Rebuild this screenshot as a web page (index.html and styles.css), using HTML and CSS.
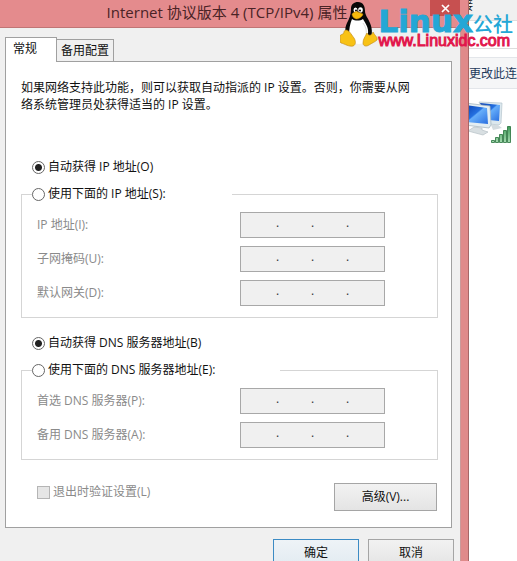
FILE: index.html
```html
<!DOCTYPE html>
<html lang="zh-CN">
<head>
<meta charset="utf-8">
<title>Internet 协议版本 4 (TCP/IPv4) 属性</title>
<link rel="stylesheet" href="styles.css">
</head>
<body>
<div class="desktop">
  <form class="dialog">
    <header class="titlebar">
      <h1 class="title">Internet 协议版本 4 (TCP/IPv4) 属性</h1>
      <button type="button" class="close" aria-label="关闭"><svg width="9" height="9" viewBox="0 0 9 9"><path d="M1 1L8 8M8 1L1 8" stroke="#fff" stroke-width="1.7"/></svg></button>
    </header>
    <div class="client">
      <div class="tabs" role="tablist">
        <button type="button" class="tab active" role="tab" aria-selected="true">常规</button>
        <button type="button" class="tab" role="tab" aria-selected="false">备用配置</button>
      </div>
      <div class="panel">
        <p class="intro">如果网络支持此功能，则可以获取自动指派的 IP 设置。否则，你需要从网络系统管理员处获得适当的 IP 设置。</p>

        <label class="choice lone"><input type="radio" name="ip" checked>自动获得 IP 地址(O)</label>
        <fieldset class="group">
          <legend class="legend"><label class="choice"><input type="radio" name="ip">使用下面的 IP 地址(S):</label></legend>
          <div class="row">
            <label for="ip1">IP 地址(I):</label>
            <div class="address"><input id="ip1" disabled><span>.</span><input aria-label="2" disabled><span>.</span><input aria-label="3" disabled><span>.</span><input aria-label="4" disabled></div>
          </div>
          <div class="row">
            <label for="mask1">子网掩码(U):</label>
            <div class="address"><input id="mask1" disabled><span>.</span><input aria-label="2" disabled><span>.</span><input aria-label="3" disabled><span>.</span><input aria-label="4" disabled></div>
          </div>
          <div class="row">
            <label for="gate1">默认网关(D):</label>
            <div class="address"><input id="gate1" disabled><span>.</span><input aria-label="2" disabled><span>.</span><input aria-label="3" disabled><span>.</span><input aria-label="4" disabled></div>
          </div>
        </fieldset>

        <label class="choice lone"><input type="radio" name="dns" checked>自动获得 DNS 服务器地址(B)</label>
        <fieldset class="group">
          <legend class="legend wide"><label class="choice"><input type="radio" name="dns">使用下面的 DNS 服务器地址(E):</label></legend>
          <div class="row">
            <label for="dns1">首选 DNS 服务器(P):</label>
            <div class="address"><input id="dns1" disabled><span>.</span><input aria-label="2" disabled><span>.</span><input aria-label="3" disabled><span>.</span><input aria-label="4" disabled></div>
          </div>
          <div class="row">
            <label for="dns2">备用 DNS 服务器(A):</label>
            <div class="address"><input id="dns2" disabled><span>.</span><input aria-label="2" disabled><span>.</span><input aria-label="3" disabled><span>.</span><input aria-label="4" disabled></div>
          </div>
        </fieldset>

        <div class="footer">
          <label class="check"><input type="checkbox" disabled>退出时验证设置(L)</label>
          <button type="button" class="button advanced">高级(V)...</button>
        </div>
      </div>
      <div class="actions">
        <button type="submit" class="button default">确定</button>
        <button type="button" class="button">取消</button>
      </div>
    </div>
  </form>

  <aside class="behind">
    <div class="caption">接</div>
    <div class="crumbs"></div>
    <div class="toolbar"><a href="#">更改此连</a></div>
    <svg class="network" width="46" height="46" viewBox="0 0 46 46" role="img" aria-label="网络连接">
      <defs>
        <linearGradient id="screen" x1="0" y1="0" x2="1" y2="1"><stop offset="0" stop-color="#0b3fb0"/><stop offset=".45" stop-color="#2470e0"/><stop offset=".5" stop-color="#66aefa"/><stop offset="1" stop-color="#2a6fe0"/></linearGradient>
        <linearGradient id="bars" x1="0" y1="0" x2="0" y2="1"><stop offset="0" stop-color="#3f9a58"/><stop offset="1" stop-color="#a5dbb0"/></linearGradient>
      </defs>
      <path d="M10 2L33 3 32 23 30 25 20 24Z" fill="#dce8ee" stroke="#b4c4cd" stroke-width=".7"/>
      <path d="M11 3L31 5 30 21 20 20Z" fill="url(#screen)"/>
      <path d="M22 25L29 25 33 28 24 30Z" fill="#d4dce0"/>
      <path d="M-4 3L21 6 22 25 20 28 -4 25Z" fill="#e4eef2" stroke="#9fb0ba" stroke-width=".7"/>
      <path d="M-4 5L18 8 19 24 -4 22Z" fill="url(#screen)"/>
      <path d="M5 27L13 28 13 30 19 32 14 35 -1 31Z" fill="#d8dfe2" stroke="#b6c0c5" stroke-width=".7"/>
      <g fill="url(#bars)" stroke="#24703a" stroke-width=".8"><path d="M22.500 40.500h3v2h-3zM26.500 37.500h3v5h-3zM30.500 34.500h3v8h-3zM34.500 30.500h3v12h-3zM38.500 26.500h3v16h-3z"/></g>
    </svg>
  </aside>

  <div class="watermark">
    <svg class="tux" width="38" height="46" viewBox="0 0 38 46" role="img" aria-label="Tux">
      <path d="M11 8C11 3 14 1 18 1c5 0 7 4 7 9 0 4 3 7 5 12 3 7 2 13 0 17H10C5 34 4 28 7 22c2-4 4-8 4-14z" fill="#080808"/>
      <path d="M12 18c3 2 8 2 11 0 2 4 6 8 5 15 0 7-4 10-9 10s-10-3-10-9c0-6 1-11 3-16z" fill="#fff"/>
      <path d="M23 22c3 4 4 8 3 13" fill="none" stroke="#ddd"/>
      <ellipse cx="15.500" cy="9" rx="2" ry="2.500" fill="#fff"/><ellipse cx="20.500" cy="9" rx="2.300" ry="2.800" fill="#fff"/>
      <circle cx="16" cy="9.500" r="1"/><circle cx="20" cy="9.500" r="1"/>
      <path d="M12 13c2-2 4-3 6-2l5 2c0 2-4 5-6 5s-5-2-5-5z" fill="#f6b90c" stroke="#b67a05" stroke-width=".5"/>
      <path d="M6 29c3 0 5 4 8 8 2 3 2 7-1 8-4 1-8-2-12-3-2-1 0-4-1-7 0-2 4-1 4-4 0-1 1-2 2-2z" fill="#f8c215" stroke="#bd8411" stroke-width=".6"/>
      <path d="M27 32c1 3 5 3 6-1 2 4 5 5 4 8-2 2-5 3-8 5-3 2-6 1-6-2 0-4 2-6 4-10z" fill="#f8c215" stroke="#bd8411" stroke-width=".6"/>
    </svg>
    <div class="brand">
      <div class="name"><b>Linux</b><span>公社</span></div>
      <div class="site">www.Linuxidc.com</div>
    </div>
  </div>
</div>
</body>
</html>
```
FILE: styles.css
```css
* { box-sizing: border-box; }

body {
  margin: 0;
  overflow: hidden;
  background: #fff;
  color: #111;
  font: 12px/18px "Open Sans", "Noto Sans CJK SC", sans-serif;
}

button, input { font: inherit; color: inherit; }

.desktop {
  position: relative;
  display: grid;
  grid-template-columns: minmax(0, 1fr) 48px;
  height: 100vh;
  overflow: hidden;
}

.dialog {
  display: flex;
  flex-direction: column;
  border-right: 1px solid #a76666;
  background: #e08a8a;
}

.titlebar {
  display: flex;
  justify-content: center;
  flex: none;
  height: 28px;
  border-bottom: 1px solid #c07575;
  background: #e48b8d;
}

.title {
  margin: 0 0 0 24px;
  flex: 1;
  text-align: center;
  color: #4a2326;
  font-size: 15px;
  font-weight: 400;
  line-height: 25px;
  white-space: nowrap;
}

.close {
  display: grid;
  place-items: center;
  width: 30px;
  height: 16px;
  margin-right: 8px;
  border: 0;
  background: #c75050;
}

.client {
  flex: 1;
  margin-right: 7px;
  padding: 9px 8px 0 5px;
  border-right: 1px solid #c99;
  background: #f0f0f0;
}

.tabs { display: flex; align-items: flex-end; }

.tab {
  height: 22px;
  padding: 0 4px;
  border: 1px solid #a0a0a0;
  border-left: 0;
  border-bottom: 0;
  background: #f0f0f0;
  line-height: 20px;
}

.tab.active {
  height: 25px;
  margin-bottom: -1px;
  padding: 0 19px 2px 7px;
  border-left: 1px solid #a0a0a0;
  background: #fff;
}

.panel {
  padding: 17px 13px 16px 15px;
  border: 1px solid #a0a0a0;
  background: #fff;
}

.intro { margin: 0 0 45px; padding-right: 22px; line-height: 17px; }

.choice { display: flex; align-items: center; gap: 3px; }
.choice.lone { margin: 0 0 9px 11px; }

.choice input {
  appearance: none;
  width: 13px;
  height: 13px;
  margin: 1px 0 0;
  border: 1px solid #666;
  border-radius: 50%;
  background: #fff;
}

.choice input:checked { background: radial-gradient(circle, #222 3px, #fff 4px); }

.group {
  display: grid;
  gap: 8px;
  margin: 0 0 16px;
  padding: 9px 10px 11px;
  border: 1px solid #d5d5d5;
}

.legend { width: 200px; padding: 0; }
.legend.wide { width: 248px; }

.row {
  display: grid;
  grid-template-columns: 203px 145px;
  align-items: center;
  padding-left: 5px;
  color: #8a8a8a;
}

.address {
  display: flex;
  align-items: center;
  height: 26px;
  padding: 0 3px 4px;
  border: 1px solid #a8a8a8;
  background: #f0f0f0;
  color: #333;
}

.address input { width: 32px; height: 20px; padding: 0; border: 0; background: none; }
.address span { width: 3px; }

.footer {
  display: flex;
  align-items: center;
  justify-content: space-between;
  margin: 23px 1px 0 0;
}

.check { display: flex; align-items: center; gap: 3px; padding: 0 0 10px 16px; color: #8a8a8a; }

.check input {
  appearance: none;
  width: 13px;
  height: 13px;
  margin: 0;
  border: 1px solid #b5b5b5;
  background: #e6e6e6;
}

.button {
  width: 86px;
  height: 28px;
  padding: 0;
  border: 1px solid #a5a5a5;
  background: linear-gradient(#f2f2f2, #e4e4e4);
}

.button.advanced { width: 103px; }
.button.default { border-color: #3c8bc4; background: linear-gradient(#eef3f7, #e2ebf1); }

.actions { display: flex; justify-content: flex-end; gap: 9px; padding-top: 11px; margin-right: -2px; }

.behind { overflow: hidden; background: #fff; }
.caption { height: 20px; background: #f0f0f0; line-height: 12px; text-indent: -8px; }
.crumbs { height: 29px; border: solid #ddd; border-width: 1px 0; }
.toolbar { height: 32px; margin: 8px 0 11px; border: solid #e3e6ea; border-width: 1px 0; background: #f5f6f7; line-height: 31px; white-space: nowrap; }
.toolbar a { color: #1e395b; text-decoration: none; }
.network { display: block; }

.watermark { position: absolute; top: 1px; right: 4px; display: flex; }
.tux { flex: none; }
.brand { display: flex; flex-direction: column; }
.name { display: flex; height: 32px; color: #24a7d6; white-space: nowrap; }
.name b { font: 700 31px/40px "DejaVu Sans", sans-serif; -webkit-text-stroke: 1px #24a7d6; }
.name span { font: 500 20px/46px "Noto Sans CJK SC", sans-serif; }
.site { color: #e2174c; font: 400 16px/16px "Liberation Sans", sans-serif; -webkit-text-stroke: 1px #e2174c; }
```
